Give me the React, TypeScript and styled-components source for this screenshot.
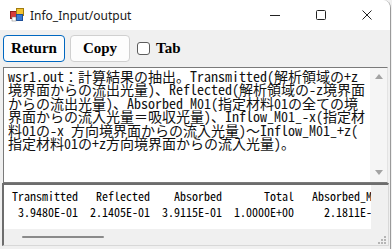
import React from "react";
import styled, { createGlobalStyle } from "styled-components";

const GlobalStyle = createGlobalStyle`
  html, body {
    margin: 0;
    padding: 0;
    background: #f0f0f0;
  }
`;

const monoStack = `"Noto Sans Mono CJK JP", "Noto Sans CJK JP", "Liberation Mono", monospace`;

const Window = styled.div`
  width: 391px;
  height: 249px;
  display: flex;
  flex-direction: column;
  background: #f0f0f0;
  border-right: 1px solid #9a9a9a;
  border-top-right-radius: 8px;
  overflow: hidden;
  box-sizing: border-box;
`;

const TitleBar = styled.div`
  height: 30px;
  display: flex;
  align-items: center;
  background: #ffffff;
  padding-left: 10px;
  flex-shrink: 0;
`;

const Title = styled.span`
  margin-left: 6px;
  font-family: "Noto Sans", "Open Sans", sans-serif;
  font-size: 12px;
  color: #1a1a1a;
  flex: 1;
`;

const CaptionButton = styled.div`
  width: 46px;
  height: 30px;
  display: flex;
  align-items: center;
  justify-content: center;
`;

const Toolbar = styled.div`
  display: flex;
  align-items: center;
  padding: 5px 3px;
  flex-shrink: 0;
`;

const Button = styled.button<{ $focused?: boolean }>`
  height: 27px;
  width: ${(p) => (p.$focused ? "62px" : "60px")};
  margin-right: ${(p) => (p.$focused ? "5px" : "7px")};
  padding: 0;
  background: #fdfdfd;
  border: 1px solid ${(p) => (p.$focused ? "#0067c0" : "#d0d0d0")};
  border-radius: 4px;
  font-family: "Liberation Serif", serif;
  font-weight: bold;
  font-size: 15px;
  color: #000;
`;

const CheckLabel = styled.label`
  display: flex;
  align-items: center;
  font-family: "Liberation Serif", serif;
  font-weight: bold;
  font-size: 15px;
  color: #000;
`;

const CheckBox = styled.span`
  width: 11px;
  height: 11px;
  border: 1px solid #5c5c5c;
  border-radius: 3px;
  background: #fff;
  margin-right: 6px;
`;

const TextBox = styled.div`
  height: 116px;
  margin: 0 2px 0 3px;
  display: flex;
  background: #fff;
  border: 1px solid #7a7a7a;
  border-right-color: #e3e3e3;
  box-sizing: border-box;
  flex-shrink: 0;
`;

const TextBody = styled.pre`
  flex: 1;
  margin: 0;
  padding: 2px 0 0 4px;
  font-family: ${monoStack};
  font-size: 14px;
  line-height: 13.4px;
  color: #111;
  white-space: pre;
  overflow: hidden;
`;

const VScroll = styled.div`
  width: 17px;
  background: #f5f5f5;
  display: flex;
  flex-direction: column;
  justify-content: space-between;
  align-items: center;
  padding: 6px 0 7px;
  box-sizing: border-box;
`;

const ArrowUp = styled.div`
  width: 0;
  height: 0;
  border-left: 4px solid transparent;
  border-right: 4px solid transparent;
  border-bottom: 5px solid #a3a3a3;
`;

const ArrowDown = styled.div`
  width: 0;
  height: 0;
  border-left: 4px solid transparent;
  border-right: 4px solid transparent;
  border-top: 5px solid #a3a3a3;
`;

const ResultBox = styled.div`
  height: 63px;
  margin: 0 1px 0 2px;
  display: grid;
  grid-template-columns: 1fr 17px;
  grid-template-rows: 1fr 16px;
  border-top: 2px solid #6d6d6d;
  border-left: 2px solid #6d6d6d;
  border-right: 1px solid #d8d8d8;
  border-bottom: 1px solid #d8d8d8;
  box-sizing: border-box;
  background: #f0f0f0;
`;

const ResultText = styled.pre`
  margin: 0;
  padding: 3px 0 0 2px;
  background: #fff;
  font-family: ${monoStack};
  font-size: 12px;
  line-height: 16px;
  color: #000;
  white-space: pre;
  overflow: hidden;
`;

const HScroll = styled.div`
  display: flex;
  align-items: center;
  padding-left: 18px;
  background: #f0f0f0;
`;

const HThumb = styled.div`
  width: 82px;
  height: 2px;
  border-radius: 1px;
  background: #8a8a8a;
`;

const Corner = styled.div`
  position: relative;
  background: #f0f0f0;
`;

const Grip = styled.svg`
  position: absolute;
  right: 2px;
  bottom: 1px;
`;

const AppIcon = () => (
  <svg width="14" height="14" viewBox="0 0 14 14">
    <rect x="0.5" y="3.5" width="7" height="7" fill="#d83b3b" stroke="#8a2020" />
    <rect x="6.5" y="0.5" width="7" height="7" fill="#f3c331" stroke="#a07c10" />
    <rect x="6.5" y="6.5" width="6" height="6" fill="#3a7bd5" stroke="#1d4f99" />
    <rect x="2" y="9" width="4" height="4" fill="#fff" stroke="#777" strokeWidth="0.5" />
  </svg>
);

const textLines = [
  "wsr1.out：計算結果の抽出。Transmitted(解析領域の+z",
  "境界面からの流出光量)、Reflected(解析領域の-z境界面",
  "からの流出光量)、Absorbed_M01(指定材料01の全ての境",
  "界面からの流入光量＝吸収光量)、Inflow_M01_-x(指定材",
  "料01の-x 方向境界面からの流入光量)～Inflow_M01_+z(",
  "指定材料01の+z方向境界面からの流入光量)。",
];

const resultLines = [
  " Transmitted   Reflected    Absorbed       Total   Absorbed_M01",
  "  3.9480E-01  2.1405E-01  3.9115E-01  1.0000E+00     2.1811E-01",
];

const App = () => (
  <>
    <GlobalStyle />
    <Window>
      <TitleBar>
        <AppIcon />
        <Title>Info_Input/output</Title>
        <CaptionButton>
          <svg width="10" height="10" viewBox="0 0 10 10">
            <line x1="0" y1="5.5" x2="10" y2="5.5" stroke="#222" strokeWidth="1" />
          </svg>
        </CaptionButton>
        <CaptionButton>
          <svg width="10" height="10" viewBox="0 0 10 10">
            <rect x="0.5" y="0.5" width="9" height="9" rx="1" fill="none" stroke="#222" />
          </svg>
        </CaptionButton>
        <CaptionButton>
          <svg width="10" height="10" viewBox="0 0 10 10">
            <path d="M0.5 0.5 L9.5 9.5 M9.5 0.5 L0.5 9.5" stroke="#222" strokeWidth="1" />
          </svg>
        </CaptionButton>
      </TitleBar>

      <Toolbar>
        <Button $focused>Return</Button>
        <Button>Copy</Button>
        <CheckLabel>
          <CheckBox />
          Tab
        </CheckLabel>
      </Toolbar>

      <TextBox>
        <TextBody>{textLines.join("\n")}</TextBody>
        <VScroll>
          <ArrowUp />
          <ArrowDown />
        </VScroll>
      </TextBox>

      <ResultBox>
        <ResultText>{resultLines.join("\n")}</ResultText>
        <div />
        <HScroll>
          <HThumb />
        </HScroll>
        <Corner>
          <Grip width="8" height="8" viewBox="0 0 8 8">
            <rect x="6" y="0" width="2" height="2" fill="#b5b5b5" />
            <rect x="3" y="3" width="2" height="2" fill="#b5b5b5" />
            <rect x="6" y="3" width="2" height="2" fill="#b5b5b5" />
            <rect x="0" y="6" width="2" height="2" fill="#b5b5b5" />
            <rect x="3" y="6" width="2" height="2" fill="#b5b5b5" />
            <rect x="6" y="6" width="2" height="2" fill="#b5b5b5" />
          </Grip>
        </Corner>
      </ResultBox>
    </Window>
  </>
);

export default App;
